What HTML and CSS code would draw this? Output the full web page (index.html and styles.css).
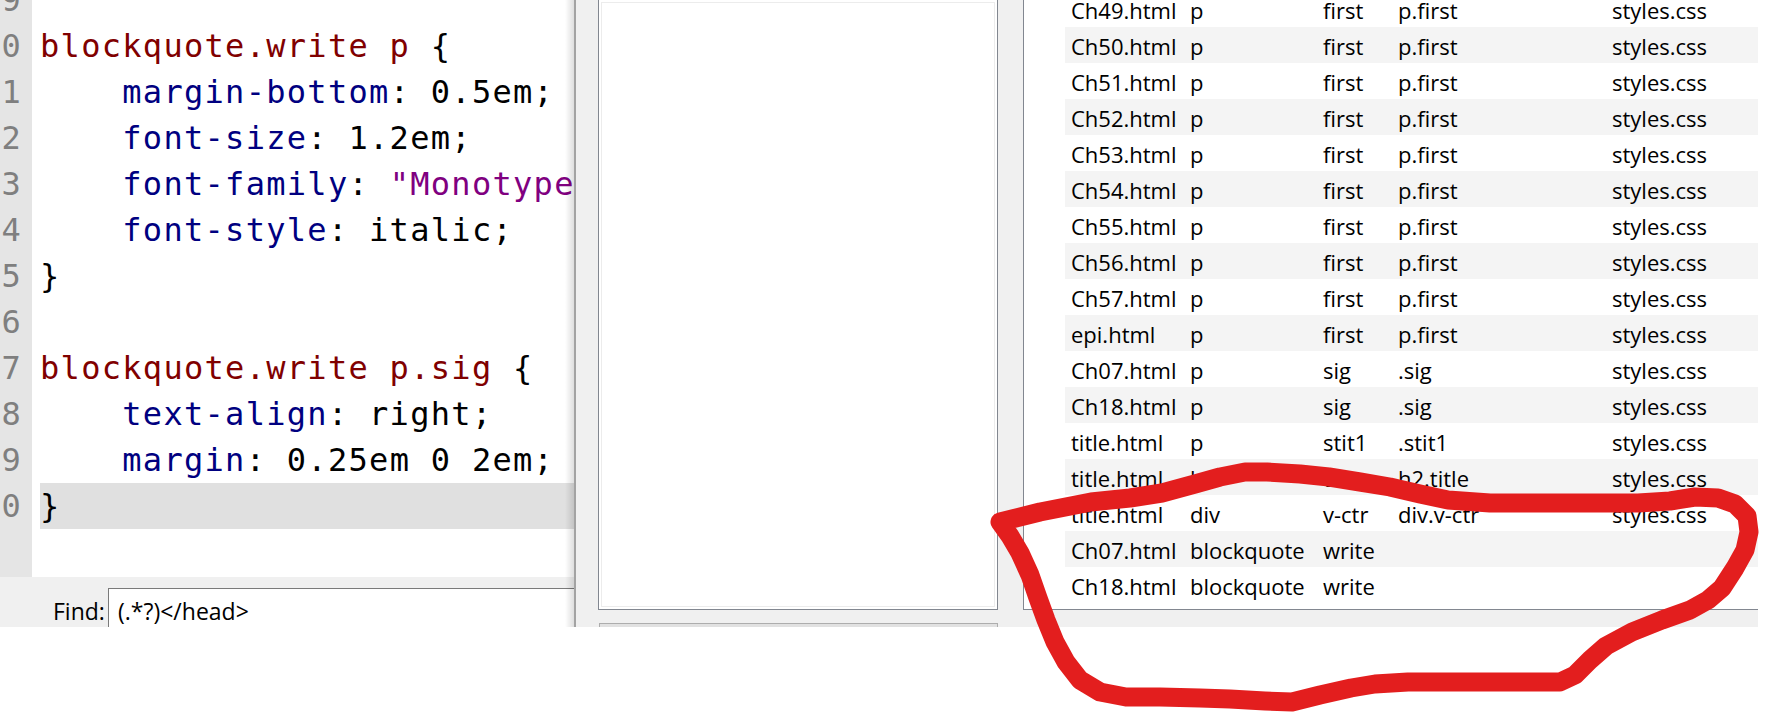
FILE: index.html
```html
<!DOCTYPE html>
<html>
<head>
<meta charset="utf-8">
<title>Editor</title>
<link rel="stylesheet" href="styles.css">
</head>
<body>
<div class="app">
  <div class="left">
    <div class="editor">
      <div class="gutter">
        <div class="ln">9</div>
        <div class="ln">0</div>
        <div class="ln">1</div>
        <div class="ln">2</div>
        <div class="ln">3</div>
        <div class="ln">4</div>
        <div class="ln">5</div>
        <div class="ln">6</div>
        <div class="ln">7</div>
        <div class="ln">8</div>
        <div class="ln">9</div>
        <div class="ln">0</div>
      </div>
      <div class="code">
        <div class="line"> </div>
        <div class="line"><span class="sel">blockquote.write p</span> {</div>
        <div class="line">    <span class="prop">margin-bottom</span>: 0.5em;</div>
        <div class="line">    <span class="prop">font-size</span>: 1.2em;</div>
        <div class="line">    <span class="prop">font-family</span>: <span class="str">"Monotype Corsiva"</span>, cursive;</div>
        <div class="line">    <span class="prop">font-style</span>: italic;</div>
        <div class="line">}</div>
        <div class="line"> </div>
        <div class="line"><span class="sel">blockquote.write p.sig</span> {</div>
        <div class="line">    <span class="prop">text-align</span>: right;</div>
        <div class="line">    <span class="prop">margin</span>: 0.25em 0 2em;</div>
        <div class="line current">}</div>
      </div>
    </div>
    <div class="findbar">
      <span class="find-label">Find:</span>
      <div class="find-input">(.*?)&lt;/head&gt;</div>
    </div>
  </div>
  <div class="middle">
    <div class="listbox"></div>
    <div class="button"></div>
  </div>
  <div class="right">
    <div class="rows">
      <div class="row"><span>Ch49.html</span><span>p</span><span>first</span><span>p.first</span><span>styles.css</span></div>
      <div class="row"><span>Ch50.html</span><span>p</span><span>first</span><span>p.first</span><span>styles.css</span></div>
      <div class="row"><span>Ch51.html</span><span>p</span><span>first</span><span>p.first</span><span>styles.css</span></div>
      <div class="row"><span>Ch52.html</span><span>p</span><span>first</span><span>p.first</span><span>styles.css</span></div>
      <div class="row"><span>Ch53.html</span><span>p</span><span>first</span><span>p.first</span><span>styles.css</span></div>
      <div class="row"><span>Ch54.html</span><span>p</span><span>first</span><span>p.first</span><span>styles.css</span></div>
      <div class="row"><span>Ch55.html</span><span>p</span><span>first</span><span>p.first</span><span>styles.css</span></div>
      <div class="row"><span>Ch56.html</span><span>p</span><span>first</span><span>p.first</span><span>styles.css</span></div>
      <div class="row"><span>Ch57.html</span><span>p</span><span>first</span><span>p.first</span><span>styles.css</span></div>
      <div class="row"><span>epi.html</span><span>p</span><span>first</span><span>p.first</span><span>styles.css</span></div>
      <div class="row"><span>Ch07.html</span><span>p</span><span>sig</span><span>.sig</span><span>styles.css</span></div>
      <div class="row"><span>Ch18.html</span><span>p</span><span>sig</span><span>.sig</span><span>styles.css</span></div>
      <div class="row"><span>title.html</span><span>p</span><span>stit1</span><span>.stit1</span><span>styles.css</span></div>
      <div class="row"><span>title.html</span><span>h2</span><span>title</span><span>h2.title</span><span>styles.css</span></div>
      <div class="row"><span>title.html</span><span>div</span><span>v-ctr</span><span>div.v-ctr</span><span>styles.css</span></div>
      <div class="row"><span>Ch07.html</span><span>blockquote</span><span>write</span><span></span><span></span></div>
      <div class="row"><span>Ch18.html</span><span>blockquote</span><span>write</span><span></span><span></span></div>
    </div>
  </div>
</div>
<svg class="annotation" width="1765" height="714" viewBox="0 0 1765 714">
  <polyline class="scribble" points="1000,522 1040,512 1091,502 1130,498 1162,493 1195,484 1220,477 1245,472 1267,472 1300,474 1329,477 1360,482 1390,487 1420,494 1448,500 1490,503 1543,503 1590,503 1638,503 1670,501 1695,497 1718,498 1735,504 1747,516 1749,532 1745,550 1735,568 1722,588 1708,600 1690,610 1662,620 1632,632 1606,646 1590,660 1575,675 1560,682 1520,682 1480,682 1440,682 1408,682 1375,684 1351,688 1320,695 1292,702 1265,701 1230,699 1200,698 1160,697 1126,697 1100,692 1080,680 1066,662 1055,642 1046,620 1038,598 1030,575 1020,553 1010,536 1000,522"/>
</svg>
</body>
</html>
```

FILE: styles.css
```css
html, body {
  margin: 0;
  padding: 0;
  background: #ffffff;
}

body {
  width: 1765px;
  height: 714px;
  overflow: hidden;
  position: relative;
  font-family: "Open Sans", "Noto Sans", sans-serif;
}

.app {
  width: 1758px;
  height: 627px;
  display: flex;
  align-items: flex-start;
  background: #f0f0f0;
  overflow: hidden;
}

/* ---------- left: code editor ---------- */
.left {
  flex: 0 0 576px;
  width: 576px;
  min-width: 0;
  height: 627px;
  box-sizing: border-box;
  border-right: 2px solid #a3a3a3;
  display: flex;
  flex-direction: column;
  position: relative;
  overflow: hidden;
}

.left::after {
  content: "";
  position: absolute;
  top: 0;
  bottom: 0;
  right: 0;
  width: 9px;
  background: linear-gradient(to right, rgba(0, 0, 0, 0), rgba(0, 0, 0, 0.13));
  pointer-events: none;
}

.editor {
  height: 577px;
  flex: 0 0 577px;
  min-width: 0;
  display: flex;
  background: #ffffff;
  overflow: hidden;
  font-family: "DejaVu Sans Mono", monospace;
  font-size: 32px;
  letter-spacing: 1.3px;
  line-height: 46px;
}

.gutter {
  flex: 0 0 32px;
  margin-top: -23px;
  background: #e5e5e5;
  color: #7f7f7f;
  text-align: right;
}

.ln {
  height: 46px;
  padding-right: 10px;
}

.code {
  flex: 1;
  min-width: 0;
  margin-top: -23px;
  padding-left: 8px;
  color: #000000;
}

.line {
  height: 46px;
  white-space: pre;
}

.line.current {
  background: #e0e0e0;
}

.sel {
  color: #800000;
}

.prop {
  color: #000080;
}

.str {
  color: #800080;
}

.findbar {
  flex: 1;
  min-width: 0;
  display: flex;
  padding: 11px 0 0 53px;
  font-size: 23px;
  line-height: 28px;
  color: #000000;
}

.find-label {
  flex: 0 0 55px;
  padding-top: 9px;
}

.find-input {
  flex: 1;
  background: #ffffff;
  border-top: 1px solid #7a7a7a;
  border-left: 1px solid #7a7a7a;
  padding: 8px 0 0 9px;
  white-space: pre;
}

/* ---------- middle panel ---------- */
.middle {
  flex: 0 0 447px;
  box-sizing: border-box;
  padding: 0 25px 0 22px;
  display: flex;
  flex-direction: column;
  height: 627px;
}

.listbox {
  height: 610px;
  flex: 0 0 610px;
  box-sizing: border-box;
  background: #ffffff;
  border: 1px solid #828790;
  border-top: 0;
  box-shadow: inset 0 0 0 2px #ffffff, inset 0 0 0 3px #ececec;
}

.button {
  margin: 13px 0 0 1px;
  height: 32px;
  flex: 0 0 32px;
  background: #e1e1e1;
  border: 1px solid #adadad;
}

/* ---------- right panel: table ---------- */
.right {
  flex: 0 0 735px;
  height: 610px;
  box-sizing: border-box;
  background: #ffffff;
  border-left: 1px solid #828790;
  border-bottom: 1px solid #828790;
  overflow: hidden;
}

.rows {
  margin: -9px 0 0 41px;
  font-size: 22px;
  color: #000000;
}

.row {
  display: grid;
  grid-template-columns: 119px 133px 75px 214px 1fr;
  height: 36px;
  box-sizing: border-box;
  padding-top: 2px;
  line-height: 34px;
  white-space: nowrap;
}

.row:nth-child(even) {
  background: #f4f4f4;
}

.row span {
  padding-left: 6px;
  overflow: hidden;
}

/* ---------- hand-drawn annotation ---------- */
.annotation {
  position: absolute;
  top: 0;
  left: 0;
  pointer-events: none;
}

.scribble {
  fill: none;
  stroke: #e31e1e;
  stroke-width: 19;
  stroke-linejoin: round;
  stroke-linecap: round;
}
```
